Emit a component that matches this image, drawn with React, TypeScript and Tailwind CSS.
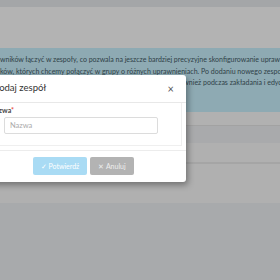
import React from "react";

export default function App() {
  const font = { fontFamily: "Lato, 'Open Sans', sans-serif" };
  return (
    <div className="relative w-[280px] h-[280px] overflow-hidden bg-[#a8aaac]" style={font}>
      <div className="h-[7px] bg-[#a4a6a8]" />
      <div className="h-[41px] bg-[#b3b3b3]" />
      <div className="h-[64px] bg-[#8eaab3] pt-[6px] text-[7px] leading-[11.5px] text-[#2f4147] whitespace-nowrap overflow-hidden">
        <div>wników łączyć w zespoły, co pozwala na jeszcze bardziej precyzyjne skonfigurowanie uprawnień.</div>
        <div>ków, których chcemy połączyć w grupy o różnych uprawnieniach. Po dodaniu nowego zespołu</div>
        <div className="pl-[177px]">również podczas zakładania i edycji</div>
      </div>
      <div className="h-[14px] bg-[#b1b1b1] border-b border-[#a2a2a2]" />
      <div className="h-[17px] bg-[#a9aaac]" />
      <div className="h-[20px] bg-[#b0b0b0] border-b border-[#a5a5a5]" />
      <div className="h-[40px] bg-[#b0b0b0] border-t border-[#a5a5a5]" />
      <div className="h-[75px] bg-[#a8aaac]" />

      {/* modal */}
      <div className="absolute left-[-20px] top-[75px] w-[206px] h-[107px] bg-white rounded-[3px] shadow-[2px_3px_6px_rgba(0,0,0,0.35)] flex flex-col">
        <div className="h-[28px] flex items-center justify-between pl-[12px] pr-[12px] border-b border-[#e8e8e8]">
          <span className="text-[9.5px] text-[#333]">Dodaj zespół</span>
          <span className="text-[11px] text-[#555] leading-none">×</span>
        </div>
        <div className="mx-[4px] h-[43px] border-b border-r border-[#efefef] pl-[6px] pt-[3px]">
          <div className="text-[7px] font-bold text-[#444] leading-[9px]">
            Nazwa<span className="text-[#e74c3c]">*</span>
          </div>
          <div className="ml-[14px] mt-[2px] w-[154px] h-[17px] border border-[#dcdcdc] rounded-[2px] flex items-center pl-[5px] text-[7.5px] text-[#aaa]">
            Nazwa
          </div>
        </div>
        <div className="mt-[4px] border-t border-[#ececec] flex-1 flex items-start pt-[6px] pl-[53px] gap-[3px]">
          <div className="w-[54px] h-[18px] bg-[#a9dbf4] rounded-[2px] flex items-center justify-center text-[7px] text-white">
            ✓ Potwierdź
          </div>
          <div className="w-[44px] h-[18px] bg-[#b3b3b3] rounded-[2px] flex items-center justify-center text-[7px] text-[#eeeeee]">
            ✕ Anuluj
          </div>
        </div>
      </div>
    </div>
  );
}
